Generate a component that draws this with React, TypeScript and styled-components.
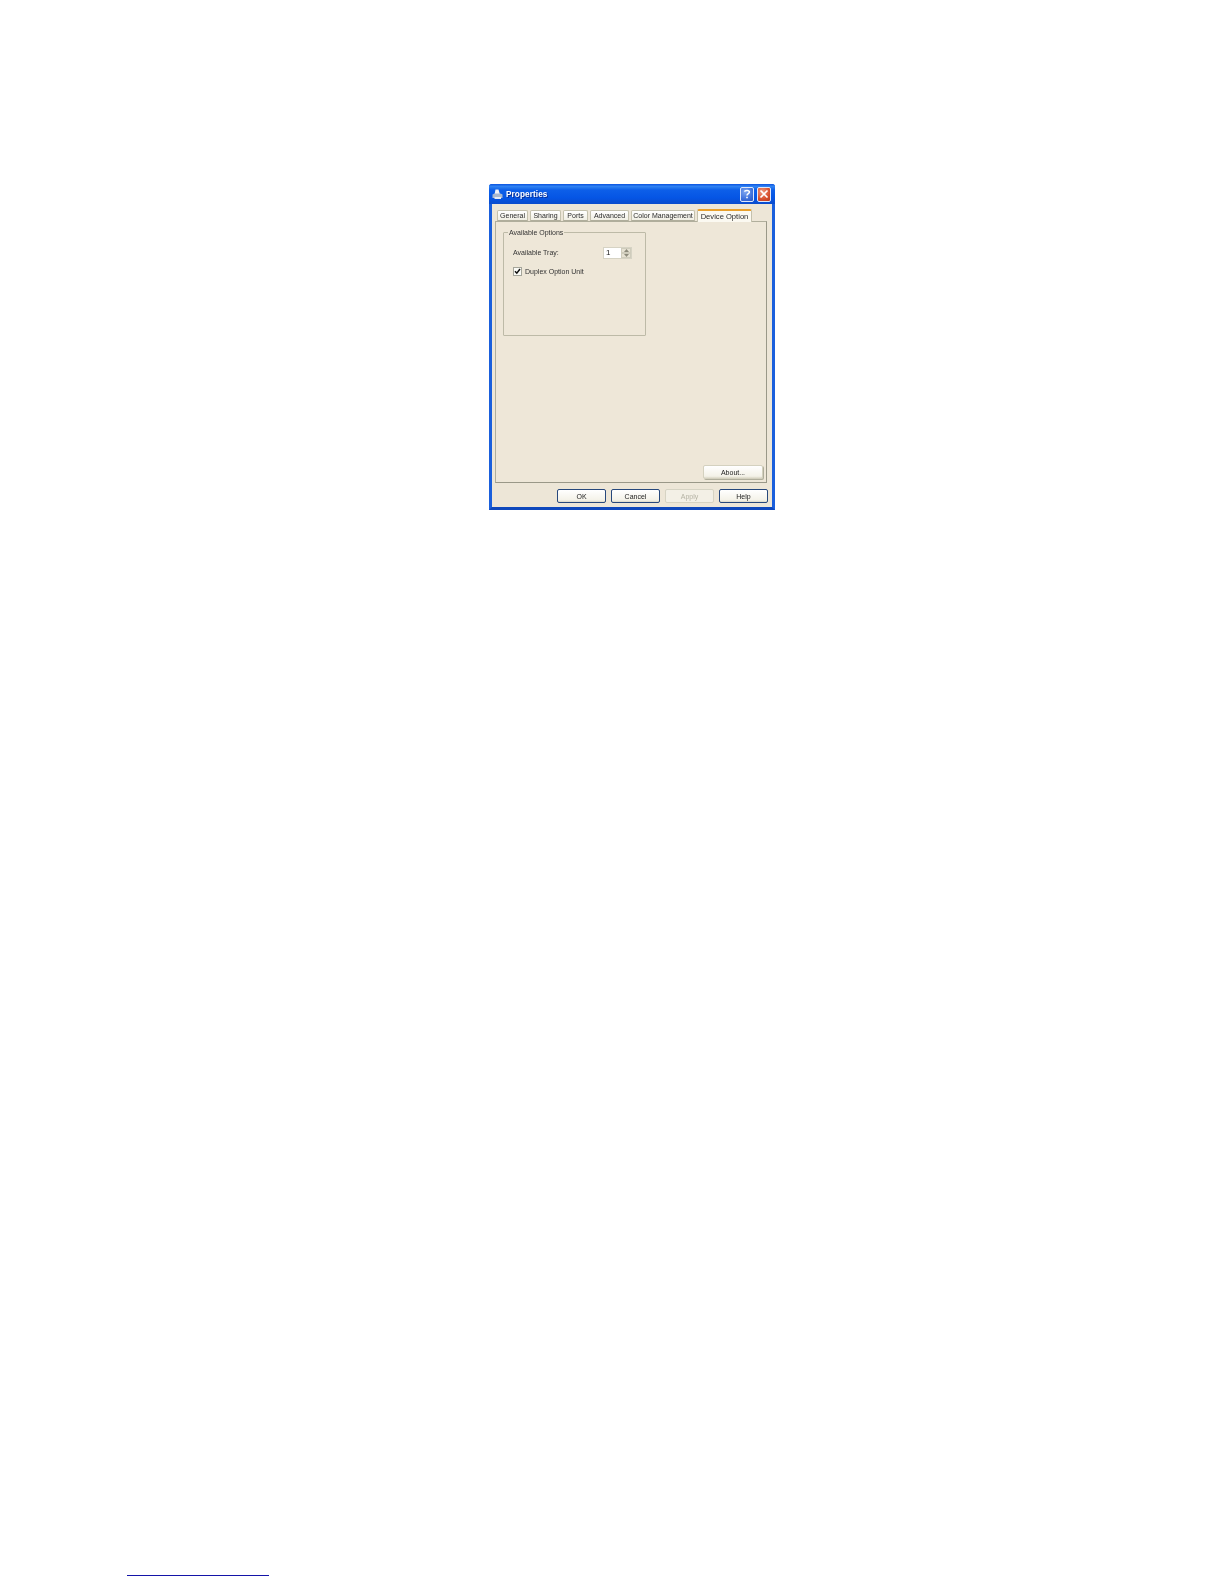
import styled, { createGlobalStyle } from 'styled-components';

const GlobalStyle = createGlobalStyle`
  html, body {
    margin: 0;
    padding: 0;
    background: #fff;
  }
`;

const Page = styled.div`
  width: 1224px;
  height: 1584px;
  box-sizing: border-box;
  padding: 184px 0 0 0;
  display: flex;
  flex-direction: column;
  overflow: hidden;
  font-family: 'Liberation Sans', Arial, sans-serif;
`;

const Dialog = styled.div`
  width: 286px;
  height: 326px;
  box-sizing: border-box;
  margin-left: 489px;
  display: flex;
  flex-direction: column;
  background: #ede6d7;
  border: 3px solid #1a5fdc;
  border-top: none;
  border-bottom-color: #0f48bc;
  border-radius: 3px 3px 0 0;
  filter: blur(0.35px);
`;

const TitleBar = styled.div`
  height: 20px;
  margin: 0 -3px;
  padding: 0 4px 0 3px;
  display: flex;
  align-items: center;
  gap: 3px;
  flex: none;
  border-radius: 3px 3px 0 0;
  background: linear-gradient(180deg, #0a53e0 0%, #2f82f2 12%, #0d5fe8 30%, #0555e4 70%, #0a4ccc 100%);
`;

const Title = styled.span`
  flex: 1;
  color: #fff;
  font-size: 8.2px;
  font-weight: bold;
  letter-spacing: 0.1px;
  text-shadow: 1px 1px 0 #0a2f96;
`;

const CaptionButton = styled.div<{ $close?: boolean }>`
  width: 14px;
  height: 15px;
  display: flex;
  align-items: center;
  justify-content: center;
  border: 1px solid #dfe8fb;
  border-radius: 2px;
  box-sizing: border-box;
  background: ${(p) =>
    p.$close
      ? 'radial-gradient(circle at 35% 30%, #f09a80, #d8502e 60%, #b83a1c)'
      : 'radial-gradient(circle at 35% 30%, #7ea6f0, #3d70dc 60%, #2a55c0)'};
`;

const Body = styled.div`
  flex: 1;
  display: flex;
  flex-direction: column;
  padding: 7px 4px 4px 3px;
`;

const TabRow = styled.div`
  height: 10px;
  padding-left: 2px;
  display: flex;
  align-items: flex-end;
  gap: 2px;
  position: relative;
  z-index: 1;
`;

const Tab = styled.div<{ $active?: boolean; $w: number }>`
  width: ${(p) => p.$w}px;
  height: ${(p) => (p.$active ? 13 : 11)}px;
  flex: none;
  box-sizing: border-box;
  display: flex;
  align-items: center;
  justify-content: center;
  font-size: ${(p) => (p.$active ? 7.6 : 7)}px;
  color: #2a2a2a;
  white-space: nowrap;
  border: 1px solid #c4c1ad;
  border-bottom: ${(p) => (p.$active ? 'none' : '1px solid #b0ae9c')};
  border-top: ${(p) => (p.$active ? '2px solid #e8a02c' : '1px solid #c4c1ad')};
  border-radius: 2px 2px 0 0;
  background: ${(p) => (p.$active ? '#fbf9f1' : 'linear-gradient(180deg, #fff, #f1efe4)')};
  margin-bottom: ${(p) => (p.$active ? '-1px' : '0')};
`;

const Panel = styled.div`
  height: 262px;
  margin-right: 1px;
  box-sizing: border-box;
  border: 1px solid #b0ae9c;
  border-right-color: #9a9888;
  border-bottom-color: #9a9888;
  background: #eee7d8;
  display: flex;
  flex-direction: column;
  padding: 6px 3px 3px 7px;
`;

const GroupBox = styled.fieldset`
  width: 143px;
  height: 108px;
  box-sizing: border-box;
  margin: 0;
  padding: 9px 0 0 9px;
  border: 1px solid #bdbaa7;
  border-radius: 1px;
  display: flex;
  flex-direction: column;
`;

const Legend = styled.legend`
  padding: 0 1px;
  margin-left: -5px;
  font-size: 7px;
  line-height: 9px;
  color: #333;
`;

const OptionRow = styled.div`
  display: flex;
  align-items: center;
  height: 13px;
`;

const TrayLabel = styled.span`
  width: 90px;
  font-size: 7px;
  color: #333;
`;

const Spinner = styled.div`
  width: 29px;
  height: 12px;
  box-sizing: border-box;
  display: flex;
  background: #fff;
  border: 1px solid #d6d3c4;
`;

const SpinnerValue = styled.span`
  flex: 1;
  font-size: 8px;
  line-height: 10px;
  padding-left: 2px;
  color: #222;
`;

const SpinnerArrows = styled.div`
  width: 10px;
  display: flex;
  flex-direction: column;
  background: #e6e2d3;
`;

const SpinnerArrow = styled.div`
  flex: 1;
  display: flex;
  align-items: center;
  justify-content: center;
  border: 0.5px solid #cfccbc;
`;

const CheckRow = styled.div`
  margin-top: 8px;
  display: flex;
  align-items: center;
  gap: 3px;
`;

const CheckBox = styled.div`
  width: 9px;
  height: 9px;
  box-sizing: border-box;
  display: flex;
  align-items: center;
  justify-content: center;
  background: #fafaf5;
  border: 1px solid #a5a59a;
`;

const CheckLabel = styled.span`
  font-size: 7px;
  color: #333;
`;

const AboutRow = styled.div`
  margin-top: auto;
  display: flex;
  justify-content: flex-end;
`;

const Button = styled.div<{ $w: number; $disabled?: boolean; $flat?: boolean }>`
  width: ${(p) => p.$w}px;
  height: 14px;
  box-sizing: border-box;
  display: flex;
  align-items: center;
  justify-content: center;
  font-size: 7px;
  color: ${(p) => (p.$disabled ? '#b5b3a4' : '#222')};
  border-radius: 2px;
  border: 1px solid ${(p) => (p.$disabled ? '#d6d3c3' : p.$flat ? '#d4d1bf' : '#27487c')};
  background: ${(p) =>
    p.$disabled ? '#f3f0e6' : 'linear-gradient(180deg, #ffffff, #f4f2e8 85%, #dcd8c8)'};
  box-shadow: ${(p) => (p.$flat ? '1px 1px 0 #b0ae9c' : 'none')};
`;

const ButtonRow = styled.div`
  margin-top: 6px;
  display: flex;
  justify-content: flex-end;
  gap: 5px;
`;

const Rule = styled.div`
  width: 142px;
  height: 1px;
  margin: auto 0 8px 127px;
  background: #1414a8;
`;

const tabs = [
  { label: 'General', w: 31 },
  { label: 'Sharing', w: 31 },
  { label: 'Ports', w: 25 },
  { label: 'Advanced', w: 39 },
  { label: 'Color Management', w: 64 },
];

const App = () => {
  return (
    <Page>
      <GlobalStyle />
      <Dialog>
        <TitleBar>
          <svg width="11" height="11" viewBox="0 0 11 11">
            <path d="M3.5 0.5h3l1.5 5H2.5z" fill="#f2f4f8" />
            <path d="M0.5 5.5l2-1h6l2 1v3.5h-10z" fill="#a9b8cf" />
            <path d="M2.5 8h6.5v2H2.5z" fill="#e4e9f2" />
          </svg>
          <Title>Properties</Title>
          <CaptionButton>
            <svg width="10" height="12" viewBox="0 0 10 11">
              <path
                d="M2.5 3.2C2.8 1.6 7.4 1.4 7.4 3.6 7.4 5.2 5 5.2 5 7"
                fill="none"
                stroke="#fff"
                strokeWidth="1.5"
              />
              <path d="M4.2 8.2h1.6v1.6H4.2z" fill="#fff" />
            </svg>
          </CaptionButton>
          <CaptionButton $close>
            <svg width="10" height="10" viewBox="0 0 10 10">
              <path d="M1.5 1.5l7 7M8.5 1.5l-7 7" stroke="#fff" strokeWidth="1.7" />
            </svg>
          </CaptionButton>
        </TitleBar>
        <Body>
          <TabRow>
            {tabs.map((t) => (
              <Tab key={t.label} $w={t.w}>
                {t.label}
              </Tab>
            ))}
            <Tab $active $w={55}>
              Device Option
            </Tab>
          </TabRow>
          <Panel>
            <GroupBox>
              <Legend>Available Options</Legend>
              <OptionRow>
                <TrayLabel>Available Tray:</TrayLabel>
                <Spinner>
                  <SpinnerValue>1</SpinnerValue>
                  <SpinnerArrows>
                    <SpinnerArrow>
                      <svg width="5" height="3" viewBox="0 0 5 3">
                        <path d="M2.5 0L5 3H0z" fill="#8d8b7c" />
                      </svg>
                    </SpinnerArrow>
                    <SpinnerArrow>
                      <svg width="5" height="3" viewBox="0 0 5 3">
                        <path d="M2.5 3L5 0H0z" fill="#8d8b7c" />
                      </svg>
                    </SpinnerArrow>
                  </SpinnerArrows>
                </Spinner>
              </OptionRow>
              <CheckRow>
                <CheckBox>
                  <svg width="7" height="7" viewBox="0 0 7 7">
                    <path d="M1 3.2l1.8 2L6 1" fill="none" stroke="#111" strokeWidth="1.5" />
                  </svg>
                </CheckBox>
                <CheckLabel>Duplex Option Unit</CheckLabel>
              </CheckRow>
            </GroupBox>
            <AboutRow>
              <Button $w={60} $flat>
                About...
              </Button>
            </AboutRow>
          </Panel>
          <ButtonRow>
            <Button $w={49}>OK</Button>
            <Button $w={49}>Cancel</Button>
            <Button $w={49} $disabled>
              Apply
            </Button>
            <Button $w={49}>Help</Button>
          </ButtonRow>
        </Body>
      </Dialog>
      <Rule />
    </Page>
  );
};

export default App;
